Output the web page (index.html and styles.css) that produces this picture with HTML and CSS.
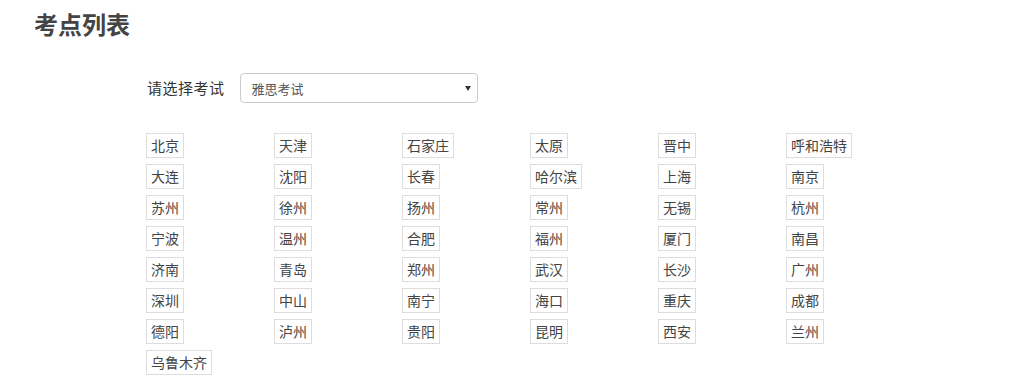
FILE: index.html
```html
<!DOCTYPE html>
<html lang="zh-CN">
<head>
<meta charset="utf-8">
<title>考点列表</title>
<link rel="stylesheet" href="styles.css">
</head>
<body>
<div class="page">
  <h1 class="title">考点列表</h1>
  <div class="form-row">
    <label class="label" for="exam">请选择考试</label>
    <div class="select-wrap">
      <select id="exam" class="select">
        <option>雅思考试</option>
      </select>
      <span class="caret"></span>
    </div>
  </div>
  <div class="city-grid">
    <span class="tag">北京</span><span class="tag">天津</span><span class="tag">石家庄</span><span class="tag">太原</span><span class="tag">晋中</span><span class="tag">呼和浩特</span>
    <span class="tag">大连</span><span class="tag">沈阳</span><span class="tag">长春</span><span class="tag">哈尔滨</span><span class="tag">上海</span><span class="tag">南京</span>
    <span class="tag">苏州</span><span class="tag">徐州</span><span class="tag">扬州</span><span class="tag">常州</span><span class="tag">无锡</span><span class="tag">杭州</span>
    <span class="tag">宁波</span><span class="tag">温州</span><span class="tag">合肥</span><span class="tag">福州</span><span class="tag">厦门</span><span class="tag">南昌</span>
    <span class="tag">济南</span><span class="tag">青岛</span><span class="tag">郑州</span><span class="tag">武汉</span><span class="tag">长沙</span><span class="tag">广州</span>
    <span class="tag">深圳</span><span class="tag">中山</span><span class="tag">南宁</span><span class="tag">海口</span><span class="tag">重庆</span><span class="tag">成都</span>
    <span class="tag">德阳</span><span class="tag">泸州</span><span class="tag">贵阳</span><span class="tag">昆明</span><span class="tag">西安</span><span class="tag">兰州</span>
    <span class="tag">乌鲁木齐</span>
  </div>
</div>
</body>
</html>
```

FILE: styles.css
```css
* { box-sizing: border-box; }
body {
  margin: 0;
  background: #fff;
  color: #333;
  font-family: "Noto Sans CJK SC", "Noto Sans", sans-serif;
}
.page {
  padding: 8px 34px 0;
}
.title {
  margin: 0;
  font-size: 24px;
  line-height: 32px;
  font-weight: bold;
  color: #444;
}
.form-row {
  display: flex;
  align-items: center;
  margin-top: 33px;
  padding-left: 113px;
}
.label {
  font-size: 15px;
  line-height: 30px;
  color: #333;
  margin-right: 15px;
  letter-spacing: 0.5px;
}
.select-wrap {
  position: relative;
  width: 238px;
  height: 30px;
}
.select {
  appearance: none;
  -webkit-appearance: none;
  width: 100%;
  height: 100%;
  border: 1px solid #ccc;
  border-radius: 4px;
  background: #fff;
  padding: 0 11px;
  font-family: inherit;
  font-size: 13px;
  color: #555;
}
.caret {
  position: absolute;
  right: 7px;
  top: 13px;
  width: 0;
  height: 0;
  border-left: 3px solid transparent;
  border-right: 3px solid transparent;
  border-top: 5px solid #333;
}
.city-grid {
  display: grid;
  grid-template-columns: repeat(6, 128px);
  row-gap: 6px;
  margin-top: 30px;
  padding-left: 112px;
}
.tag {
  justify-self: start;
  height: 25px;
  padding: 0 4px;
  border: 1px solid #ddd;
  font-size: 14px;
  line-height: 23px;
  color: #444;
  white-space: nowrap;
}
```
